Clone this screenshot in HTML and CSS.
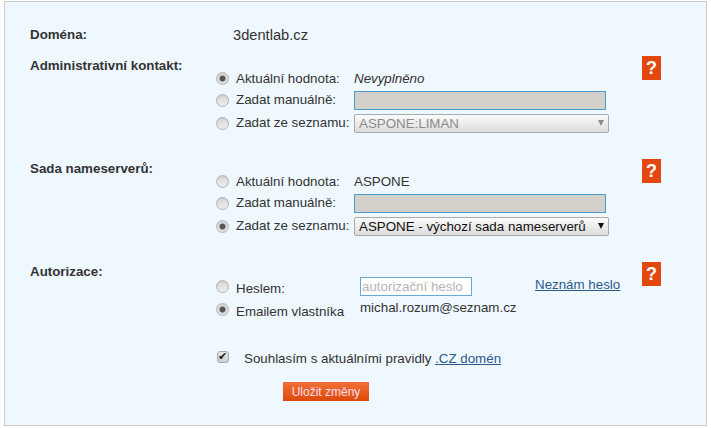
FILE: index.html
```html
<!DOCTYPE html>
<html lang="cs">
<head>
<meta charset="utf-8">
<title>Doména</title>
<link rel="stylesheet" href="styles.css">
</head>
<body>
<form class="panel">
  <div class="domain">
    <div class="label">Doména:</div>
    <div class="domain-value">3dentlab.cz</div>
  </div>

  <section class="section">
    <div class="label">Administrativní kontakt:</div>
    <div class="options">
      <label class="opt opt-a"><input class="radio" type="radio" name="a" checked><span class="opt-name">Aktuální hodnota:</span><em>Nevyplněno</em></label>
      <label class="opt opt-b"><input class="radio" type="radio" name="a"><span class="opt-name">Zadat manuálně:</span><input class="field" type="text"></label>
      <label class="opt opt-c"><input class="radio" type="radio" name="a"><span class="opt-name">Zadat ze seznamu:</span><span class="select-wrap is-disabled"><select class="select" disabled><option>ASPONE:LIMAN</option></select></span></label>
    </div>
    <a class="help">?</a>
  </section>

  <section class="section">
    <div class="label">Sada nameserverů:</div>
    <div class="options">
      <label class="opt opt-a"><input class="radio" type="radio" name="b"><span class="opt-name">Aktuální hodnota:</span><span>ASPONE</span></label>
      <label class="opt opt-b"><input class="radio" type="radio" name="b"><span class="opt-name">Zadat manuálně:</span><input class="field" type="text"></label>
      <label class="opt opt-c"><input class="radio" type="radio" name="b" checked><span class="opt-name">Zadat ze seznamu:</span><span class="select-wrap"><select class="select"><option>ASPONE - výchozí sada nameserverů</option></select></span></label>
    </div>
    <a class="help">?</a>
  </section>

  <section class="section section-auth">
    <div class="label">Autorizace:</div>
    <div class="auth">
      <div class="auth-names">
        <label class="auth-opt"><input class="radio" type="radio" name="c"><span>Heslem:</span></label>
        <label class="auth-opt"><input class="radio" type="radio" name="c" checked><span>Emailem vlastníka</span></label>
      </div>
      <div class="auth-values">
        <input class="pass" type="text" placeholder="autorizační heslo">
        <div class="email">michal.rozum@seznam.cz</div>
      </div>
      <a class="link forgot" href="#">Neznám heslo</a>
    </div>
    <a class="help">?</a>
  </section>

  <label class="agree"><input class="check" type="checkbox" checked><span>Souhlasím s aktuálními pravidly <a class="link" href="#">.CZ domén</a></span></label>
  <button class="save" type="button">Uložit změny</button>
</form>
</body>
</html>
```
FILE: styles.css
```css
* { box-sizing: border-box; }
html, body { margin: 0; background: #fff; }
body { font-family: "Liberation Sans", Arial, sans-serif; font-size: 13.33px; color: #333; }

.panel {
  display: block;
  width: 703px;
  height: 425px;
  margin: 1px 4px 0;
  padding: 23px 0 0 25px;
  background: #eff7ff;
  border: 1px solid #ccc;
}

.label { font-weight: bold; line-height: 19px; color: #333; }

.domain { display: grid; grid-template-columns: 203px auto; align-items: center; height: 16px; margin-bottom: 15px; }
.domain-value { font-size: 14.67px; }

.section {
  display: grid;
  grid-template-columns: 186px 426px 19px;
  height: 103px;
}
.section-auth { height: 84px; }

.options { padding-top: 12px; }
.opt { display: flex; align-items: center; height: 20px; }
.opt-a .opt-name { margin-top: 0; }
.opt-b { height: 21px; margin-top: 1px; padding-top: 1px; }
.opt-c { height: 23px; padding-top: 3px; }
.opt-name { width: 118px; margin-top: -2px; }
.opt em { font-style: italic; }

.radio {
  appearance: none;
  flex: none;
  width: 13px;
  height: 13px;
  margin: 0 7px 0 0;
  border: 1px solid #b4b4b4;
  border-radius: 50%;
  background: linear-gradient(#d8d8d8, #ececec);
  box-shadow: inset 0 1px 1px rgba(0,0,0,.08);
}
.radio:checked { background: radial-gradient(circle, #555 0, #555 2.6px, #d8d8d8 3.4px, #eee 100%); }

.field {
  width: 252px;
  height: 19px;
  padding: 0 2px;
  border: 1px solid #4a9bd0;
  background: #d3cfc9;
}

.select-wrap { position: relative; display: block; width: 255px; height: 19px; }
.select-wrap::after {
  content: "";
  position: absolute;
  right: 5px;
  top: 6px;
  border-left: 3.5px solid transparent;
  border-right: 3.5px solid transparent;
  border-top: 6px solid #111;
}
.select-wrap.is-disabled::after { border-top-color: #8a8a8a; }
.select {
  appearance: none;
  display: block;
  width: 100%;
  height: 19px;
  padding: 0 0 0 4px;
  font: 13.33px "Liberation Sans", Arial, sans-serif;
  color: #111;
  border: 1px solid #aaa;
  border-radius: 2px;
  background: linear-gradient(#fbfbfb, #dcdcdc);
  opacity: 1;
}
.select:disabled { color: #8c8c8c; }

.help {
  display: block;
  width: 19px;
  height: 24px;
  background: #e2470e;
  color: #fff;
  font-weight: bold;
  font-size: 18px;
  line-height: 24px;
  text-align: center;
}

.auth { display: flex; align-items: flex-start; padding-top: 15px; }
.auth-names { width: 144px; padding-top: 2px; }
.auth-opt { display: flex; height: 23px; }
.auth-opt span { padding-top: 2px; }
.auth-opt .radio { margin-top: 1px; }
.auth-values { width: 175px; }
.pass {
  display: block;
  width: 112px;
  height: 19px;
  padding: 0 1px;
  font: 13.33px "Liberation Sans", Arial, sans-serif;
  color: #333;
  background: #fff;
  border: 1px solid #6aa9d6;
}
.pass::placeholder { color: #b5b5b5; opacity: 1; }
.email { margin-top: 4px; line-height: 15px; }

.link { color: #2c5a8c; text-decoration: underline; }
.forgot { margin-top: 0; }

.agree { display: flex; align-items: center; height: 16px; margin: 4px 0 0 187px; }
.check {
  appearance: none;
  flex: none;
  width: 12px;
  height: 12px;
  margin: -2px 15px 0 0;
  border: 1px solid #aaa;
  border-radius: 3px;
  background: linear-gradient(#e6e6e6, #cfcfcf);
  position: relative;
}
.check:checked::after {
  content: "✔";
  position: absolute;
  left: 0;
  top: -2px;
  font-size: 11px;
  line-height: 13px;
  color: #222;
}

.save {
  display: block;
  width: 86px;
  height: 19px;
  margin: 16px 0 0 253px;
  padding: 0;
  border: 0;
  font: 12px "Liberation Sans", Arial, sans-serif;
  color: #fde;
  background: linear-gradient(#f0703a, #dc4a08);
}
```
